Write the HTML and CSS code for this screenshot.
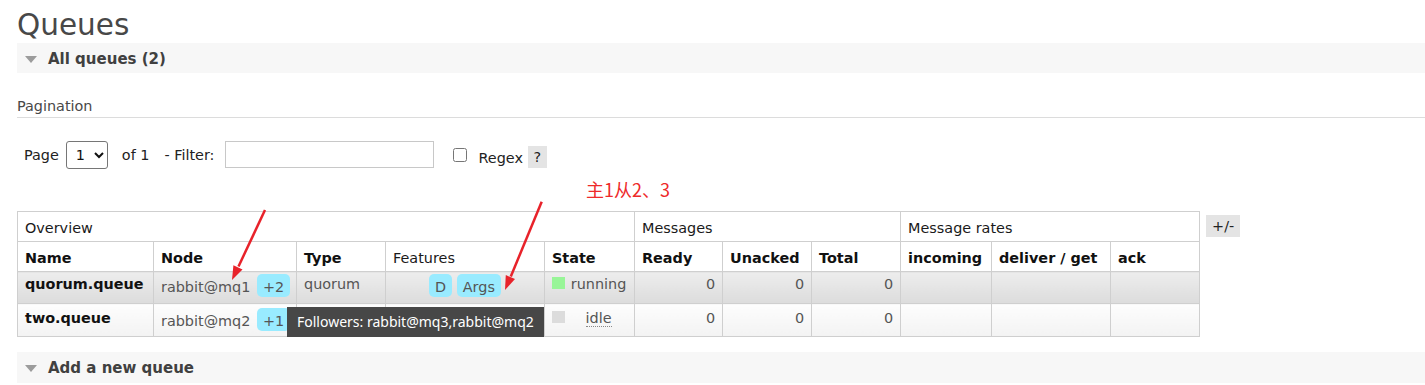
FILE: index.html
```html
<!DOCTYPE html>
<html>
<head>
<meta charset="utf-8">
<title>Queues</title>
<link rel="stylesheet" href="styles.css">
</head>
<body>
<div class="page">
  <h1 class="title">Queues</h1>
  <div class="section">
    <h2 class="section-head"><span class="tri"></span><span class="head-text">All queues (2)</span></h2>
    <div class="section-body">
      <h3 class="subhead">Pagination</h3>
      <div class="pager">
        <span class="lbl">Page</span>
        <select class="sel"><option>1</option></select>
        <span class="lbl of">of 1</span>
        <span class="lbl filter">- Filter:</span>
        <input class="filter-input" type="text">
        <input class="chk" type="checkbox">
        <span class="regex">Regex</span>
        <span class="help">?</span>
      </div>
      <div class="table-row">
        <table class="list">
          <colgroup>
            <col class="w-name"><col class="w-node"><col class="w-type"><col class="w-feat"><col class="w-state">
            <col class="w-ready"><col class="w-unacked"><col class="w-total">
            <col class="w-in"><col class="w-deliver"><col class="w-ack">
          </colgroup>
          <thead>
            <tr class="group">
              <th colspan="5">Overview</th>
              <th colspan="3">Messages</th>
              <th colspan="3">Message rates</th>
            </tr>
            <tr class="cols">
              <th><b>Name</b></th>
              <th><b>Node</b></th>
              <th><b>Type</b></th>
              <th>Features</th>
              <th><b>State</b></th>
              <th><b>Ready</b></th>
              <th><b>Unacked</b></th>
              <th><b>Total</b></th>
              <th><b>incoming</b></th>
              <th><b>deliver / get</b></th>
              <th><b>ack</b></th>
            </tr>
          </thead>
          <tbody>
            <tr class="alt1">
              <td><b class="qname">quorum.queue</b></td>
              <td class="badge-cell">rabbit@mq1 <span class="badge">+2</span></td>
              <td>quorum</td>
              <td class="badge-cell center"><span class="badge">D</span> <span class="badge">Args</span></td>
              <td><span class="sq green"></span> <span class="st">running</span></td>
              <td class="num">0</td>
              <td class="num">0</td>
              <td class="num">0</td>
              <td></td><td></td><td></td>
            </tr>
            <tr class="alt2">
              <td><b class="qname">two.queue</b></td>
              <td class="badge-cell tip-host">rabbit@mq2 <span class="badge">+1</span><span class="tooltip">Followers: rabbit@mq3,rabbit@mq2</span></td>
              <td></td>
              <td class="center"></td>
              <td><span class="sq grey"></span> <span class="st"><span class="abbr">idle</span></span></td>
              <td class="num">0</td>
              <td class="num">0</td>
              <td class="num">0</td>
              <td></td><td></td><td></td>
            </tr>
          </tbody>
        </table>
        <span class="plusminus">+/-</span>
      </div>
    </div>
  </div>
  <div class="section section-add">
    <h2 class="section-head"><span class="tri"></span><span class="head-text">Add a new queue</span></h2>
  </div>

  <svg class="annot" width="1425" height="385" viewBox="0 0 1425 385">
    <line x1="265" y1="210" x2="238.5" y2="266.5" class="arrow-line"/>
    <polygon points="232,280 242.5,269.5 233.4,265.2" class="arrow-head"/>
    <line x1="541.7" y1="201.7" x2="510.8" y2="276.5" class="arrow-line"/>
    <polygon points="505,290 515,279 505.8,275.1" class="arrow-head"/>
  </svg>
  <div class="annot-text">主1从2、3</div>
</div>
</body>
</html>
```

FILE: styles.css
```css
* { box-sizing: border-box; }
html, body { margin: 0; padding: 0; background: #fff; }
body {
  font-family: "DejaVu Sans", Verdana, sans-serif;
  font-size: 14.4px;
  line-height: 16px;
  color: #484848;
}
.page {
  position: relative;
  padding-left: 17px;
  width: 1425px;
  height: 385px;
  overflow: hidden;
}
.title {
  margin: 8px 0 1px;
  font-size: 29.5px;
  line-height: 34px;
  font-weight: normal;
  color: #484848;
}
.section-head {
  display: flex;
  align-items: flex-start;
  margin: 0;
  height: 30px;
  padding-top: 3px;
  background: #f7f7f7;
  font-size: 15px;
  line-height: 27px;
  font-weight: bold;
  color: #404040;
}
.tri {
  width: 0;
  height: 0;
  margin: 10px 0 0 8px;
  border-left: 6px solid transparent;
  border-right: 6px solid transparent;
  border-top: 7px solid #9c9c9c;
}
.head-text { margin-left: 11px; }
.subhead {
  margin: 25px 0 0;
  padding-bottom: 2px;
  border-bottom: 1px solid #dcdcdc;
  font-size: 14.4px;
  line-height: 17px;
  font-weight: normal;
  color: #484848;
}
.pager {
  display: flex;
  align-items: flex-start;
  margin-top: 23px;
  padding-left: 7px;
  color: #222;
}
.lbl { margin-top: 6px; line-height: 17px; }
.sel {
  margin-left: 7px;
  width: 42px;
  height: 28px;
  padding: 0 0 0 5px;
  border: 1px solid #767676;
  border-radius: 3px;
  background: #fff;
  color: #111;
  font-family: "DejaVu Sans", Verdana, sans-serif;
  font-size: 14.4px;
}
.of { margin-left: 14px; }
.filter { margin-left: 15px; }
.filter-input {
  margin-left: 11px;
  width: 209px;
  height: 27px;
  border: 1px solid #c8c8c8;
  border-radius: 0;
  background: #fff;
}
.chk {
  margin: 7px 0 0 19px;
  width: 14px;
  height: 14px;
}
.regex { margin: 9px 0 0 11px; line-height: 17px; }
.help {
  margin: 5px 0 0 5px;
  width: 19px;
  height: 22px;
  line-height: 22px;
  text-align: center;
  background: #e4e4e4;
  color: #222;
}
.table-row {
  display: flex;
  align-items: flex-start;
  margin-top: 42px;
}
.list {
  border-collapse: collapse;
  table-layout: fixed;
  width: 1182px;
  border: 1px solid #cfcfcf;
}
.w-name { width: 136px; }
.w-node { width: 143px; }
.w-type { width: 89px; }
.w-feat { width: 159px; }
.w-state { width: 90px; }
.w-ready { width: 88px; }
.w-unacked { width: 89px; }
.w-total { width: 89px; }
.w-in { width: 91px; }
.w-deliver { width: 119px; }
.w-ack { width: 89px; }
.list th, .list td {
  border: 1px solid #cfcfcf;
  text-align: left;
  vertical-align: top;
  white-space: nowrap;
}
.list th {
  padding: 8px 7px 5px;
  font-weight: normal;
  color: #1a1a1a;
}
.list th b { color: #111; }
.list td {
  padding: 4px 7px 0;
  color: #555;
}
.alt1 td { height: 32px; }
.alt2 td { height: 33px; padding-top: 6px; }
.list .alt1 td.badge-cell { padding-top: 2px; }
.list .alt2 td.badge-cell { padding-top: 4px; }
.list td.center { text-align: center; }
.list td.num { text-align: right; }
.qname { color: #111; }
.alt1 td { background: linear-gradient(#ededed, #dcdcdc); }
.alt2 td { background: linear-gradient(#fdfdfd, #f3f3f3); }
.badge {
  display: inline-block;
  padding: 5px 6px 2px;
  margin-left: 2px;
  border-radius: 5px;
  background: #99ebff;
  color: #555;
}
.center .badge { margin-left: 0; }
.sq {
  display: inline-block;
  width: 13px;
  height: 12px;
}
.sq.green { background: #98f598; }
.sq.grey { background: #dcdcdc; }
.st {
  display: inline-block;
  width: 56px;
  margin-left: 1px;
  text-align: center;
}
.abbr { border-bottom: 1px dotted #888; }
.tip-host { position: relative; }
.tooltip {
  position: absolute;
  left: 133px;
  top: 3px;
  z-index: 5;
  height: 30px;
  padding: 0 10px;
  font-family: "Noto Sans", sans-serif;
  font-size: 14px;
  line-height: 30px;
  background: #474747;
  color: #fff;
  white-space: nowrap;
}
.plusminus {
  margin: 4px 0 0 6px;
  height: 22px;
  padding: 0 6px;
  line-height: 22px;
  background: #e4e4e4;
  color: #222;
}
.section-add { margin-top: 15px; }
.section-add .section-head { height: 31px; }
.annot {
  position: absolute;
  left: 0;
  top: 0;
  z-index: 10;
  pointer-events: none;
}
.arrow-line { stroke: #e8222a; stroke-width: 2.5; }
.arrow-head { fill: #e8222a; }
.annot-text {
  position: absolute;
  left: 586px;
  top: 179px;
  z-index: 10;
  font-family: "Noto Sans CJK SC", sans-serif;
  font-size: 18px;
  line-height: 20px;
  color: #ee2a2a;
  white-space: nowrap;
}
```
